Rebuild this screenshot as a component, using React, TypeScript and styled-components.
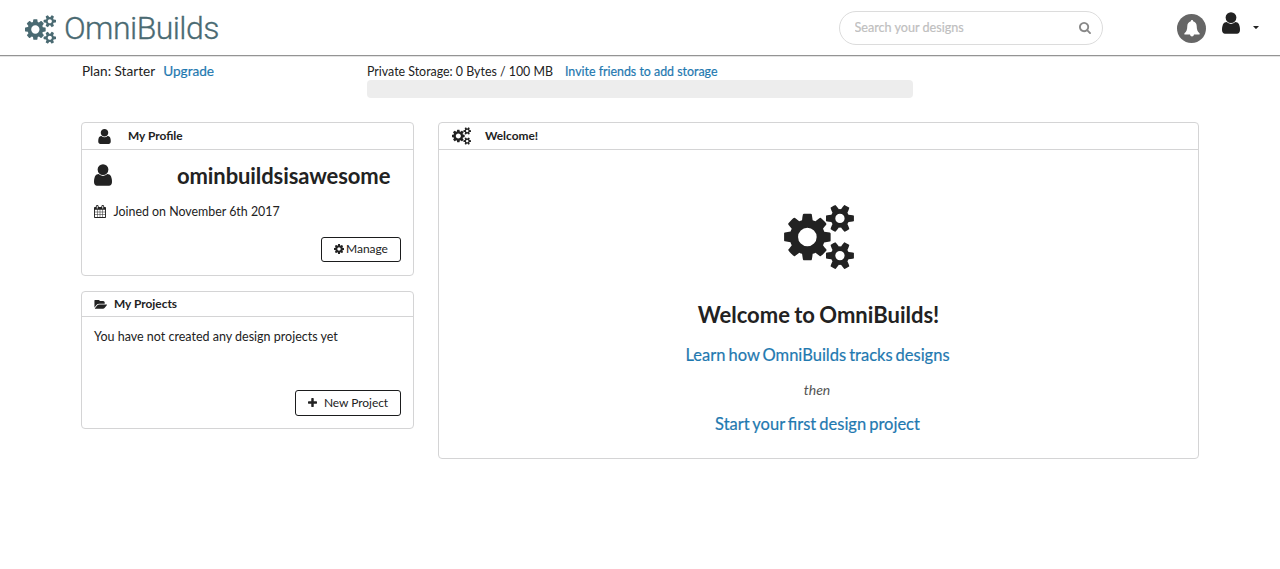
import React from "react";
import styled, { createGlobalStyle } from "styled-components";

const GlobalStyle = createGlobalStyle`
  *, *::before, *::after { box-sizing: border-box; }
  body {
    margin: 0;
    background: #fff;
    color: #222;
    font-family: Lato, "Liberation Sans", sans-serif;
    font-size: 13px;
    line-height: 18px;
  }
  h1, h2, h3, p { margin: 0; }
`;

const GEAR_SMALL =
  "v140q0 16-149 31-12 27-30 52 51 113 51 138 0 4-4 7-122 71-124 71-8 0-46-47t-52-68q-20 2-30 2t-30-2q-14 21-52 68t-46 47q-2 0-124-71-4-3-4-7 0-25 51-138-18-25-30-52-149-15-149-31v-140q0-16 149-31 13-29 30-52-51-113-51-138 0-4 4-7 4-2 35-20t59-34 30-16q8 0 46 46.5t52 67.5q20-2 30-2t30 2q51-71 92-112l6-2q4 0 124 70 4 3 4 7 0 25-51 138 17 23 30 52 149 15 149 31z";

const ICONS = {
  user: {
    box: "256 128 1280 1536",
    d: "M1536 1399q0 109-62.5 187t-150.5 78h-854q-88 0-150.5-78t-62.5-187q0-85 8.5-160.5t31.5-152 58.5-131 94-89 134.5-34.5q131 128 313 128t313-128q76 0 134.5 34.5t94 89 58.5 131 31.5 152 8.5 160.5zm-256-887q0 159-112.5 271.5t-271.5 112.5-271.5-112.5-112.5-271.5 112.5-271.5 271.5-112.5 271.5 112.5 112.5 271.5z",
  },
  cogs: {
    box: "-64 16 1920 1760",
    d:
      "M832 896q0-106-75-181t-181-75-181 75-75 181 75 181 181 75 181-75 75-181zm768 512q0-52-38-90t-90-38-90 38-38 90q0 53 37.5 90.5t90.5 37.5 90.5-37.5 37.5-90.5zm0-1024q0-52-38-90t-90-38-90 38-38 90q0 53 37.5 90.5t90.5 37.5 90.5-37.5 37.5-90.5zm-384 421v185q0 10-7 19.5t-16 10.5l-155 24q-11 35-32 76 34 48 90 115 7 11 7 20 0 12-7 19-23 30-82.5 89.5t-78.5 59.5q-11 0-21-7l-115-90q-37 19-77 31-11 108-23 155-7 24-30 24h-186q-11 0-20-7.5t-10-17.5l-23-153q-34-10-75-31l-118 89q-7 7-20 7-11 0-21-8-144-133-144-160 0-9 7-19 10-14 41-53t47-61q-23-44-35-82l-152-24q-10-1-17-9.5t-7-19.5v-185q0-10 7-19.5t16-10.5l155-24q11-35 32-76-34-48-90-115-7-11-7-20 0-12 7-20 22-30 82-89t79-59q11 0 21 7l115 90q34-18 77-32 11-108 23-154 7-24 30-24h186q11 0 20 7.5t10 17.5l23 153q34 10 75 31l118-89q8-7 20-7 11 0 21 8 144 133 144 160 0 8-7 19-12 16-42 54t-45 60q23 48 34 82l152 23q10 2 17 10.5t7 19.5z" +
      "M1856 1338" + GEAR_SMALL + "M1856 314" + GEAR_SMALL,
  },
  folder: {
    box: "0 256 1943 1280",
    d: "M1943 952q0 31-31 66l-336 396q-43 51-120.5 86.5t-143.5 35.5h-1088q-34 0-60.5-13t-26.5-43q0-31 31-66l336-396q43-51 120.5-86.5t143.5-35.5h1088q34 0 60.5 13t26.5 43zm-343-344v160h-832q-94 0-197 47.5t-164 119.5l-337 396-5 6q0-4-.5-12.5t-.5-12.5v-960q0-92 66-158t158-66h320q92 0 158 66t66 158v32h544q92 0 158 66t66 158z",
  },
  plus: {
    box: "192 128 1408 1408",
    d: "M1600 736v192q0 40-28 68t-68 28h-416v416q0 40-28 68t-68 28h-192q-40 0-68-28t-28-68v-416h-416q-40 0-68-28t-28-68v-192q0-40 28-68t68-28h416v-416q0-40 28-68t68-28h192q40 0 68 28t28 68v416h416q40 0 68 28t28 68z",
  },
  search: {
    box: "64 128 1664 1664",
    d: "M1216 832q0-185-131.5-316.5t-316.5-131.5-316.5 131.5-131.5 316.5 131.5 316.5 316.5 131.5 316.5-131.5 131.5-316.5zm512 832q0 52-38 90t-90 38q-54 0-90-38l-343-342q-179 124-399 124-143 0-273.5-55.5t-225-150-150-225-55.5-273.5 55.5-273.5 150-225 225-150 273.5-55.5 273.5 55.5 225 150 150 225 55.5 273.5q0 220-124 399l343 343q37 37 37 90z",
  },
  cog: {
    box: "128 128 1536 1536",
    d: "M1152 896q0-106-75-181t-181-75-181 75-75 181 75 181 181 75 181-75 75-181zm512-109v222q0 12-8 23t-20 13l-185 28q-19 54-39 91 35 50 107 138 10 12 10 25t-9 23q-27 37-99 108t-94 71q-12 0-26-9l-138-108q-44 23-91 38-16 136-29 186-7 28-36 28h-222q-14 0-24.5-8.5t-11.5-21.5l-28-184q-49-16-90-37l-141 107q-10 9-25 9-14 0-25-11-126-114-165-168-7-10-7-23 0-12 8-23 15-21 51-66.5t54-70.5q-27-50-41-99l-183-27q-13-2-21-12.5t-8-23.5v-222q0-12 8-23t19-13l186-28q14-46 39-92-40-57-107-138-10-12-10-24 0-10 9-23 26-36 98.5-107.5t94.5-71.5q13 0 26 10l138 107q44-23 91-38 16-136 29-186 7-28 36-28h222q14 0 24.5 8.5t11.5 21.5l28 184q49 16 90 37l142-107q9-9 24-9 13 0 25 10 129 119 165 170 7 8 7 22 0 12-8 23-15 21-51 66.5t-54 70.5q26 50 41 98l183 28q13 2 21 12.5t8 23.5z",
  },
  calendar: {
    box: "64 0 1664 1792",
    d: "M192 1664h288v-288h-288v288zm352 0h320v-288h-320v288zm-352-352h288v-320h-288v320zm352 0h320v-320h-320v320zm-352-384h288v-288h-288v288zm736 736h320v-288h-320v288zm-384-736h320v-288h-320v288zm768 736h288v-288h-288v288zm-384-352h320v-320h-320v320zm-352-864v-288q0-13-9.5-22.5t-22.5-9.5h-64q-13 0-22.5 9.5t-9.5 22.5v288q0 13 9.5 22.5t22.5 9.5h64q13 0 22.5-9.5t9.5-22.5zm736 864h288v-320h-288v320zm-384-384h320v-288h-320v288zm384 0h288v-288h-288v288zm32-480v-288q0-13-9.5-22.5t-22.5-9.5h-64q-13 0-22.5 9.5t-9.5 22.5v288q0 13 9.5 22.5t22.5 9.5h64q13 0 22.5-9.5t9.5-22.5zm384-64v1280q0 52-38 90t-90 38h-1408q-52 0-90-38t-38-90v-1280q0-52 38-90t90-38h128v-96q0-66 47-113t113-47h64q66 0 113 47t47 113v96h384v-96q0-66 47-113t113-47h64q66 0 113 47t47 113v96h128q52 0 90 38t38 90z",
  },
  bell: {
    box: "0 0 16 17",
    d: "M8 0C8.7 0 9.1.5 9.1 1.3C11.4 1.9 12.6 3.7 12.7 6C12.8 9.5 13.5 11.8 15.6 13.2V14.6H10C9.8 15.8 9 16.5 8 16.5S6.2 15.8 6 14.6H.4V13.2C2.5 11.8 3.2 9.5 3.3 6C3.4 3.7 4.6 1.9 6.9 1.3C6.9.5 7.3 0 8 0Z",
  },
  caret: { box: "0 0 6 3", d: "M0 0H6L3.4 2.8Q3 3.1 2.6 2.8Z" },
};

const Glyph = styled.svg<{ $w: number; $h: number }>`
  display: block;
  flex: none;
  width: ${(p) => p.$w}px;
  height: ${(p) => p.$h}px;
  fill: currentColor;
`;

const Icon = ({ name, w, h }: { name: keyof typeof ICONS; w: number; h: number }) => (
  <Glyph $w={w} $h={h} viewBox={ICONS[name].box} aria-hidden="true">
    <path d={ICONS[name].d} />
  </Glyph>
);

const Header = styled.header`
  display: flex;
  align-items: flex-start;
  height: 57px;
  padding: 11px 21px 0 25px;
  border-bottom: 1px solid #e4e4e4;
  box-shadow: inset 0 -1px 0 #949494;
`;

const Brand = styled.div`
  display: flex;
  align-items: flex-start;
  gap: 8px;
  padding-top: 4px;
  color: #4a6a72;
`;

const BrandName = styled.span`
  margin-top: -7px;
  font: 300 32px/40px Roboto, "Open Sans", sans-serif;
  letter-spacing: -0.55px;
  white-space: nowrap;
  -webkit-text-stroke: 0.3px currentColor;
`;

const SearchBox = styled.label`
  display: flex;
  align-items: center;
  width: 264px;
  height: 34px;
  margin-left: auto;
  padding: 0 11px 1px 14.5px;
  border: 1px solid #dcdcdc;
  border-radius: 17px;
  color: #888;
`;

const SearchInput = styled.input`
  flex: 1;
  min-width: 0;
  padding: 0;
  border: 0;
  outline: 0;
  background: transparent;
  font: 12.6px Lato, sans-serif;
  &::placeholder {
    color: #c0c0c0;
    opacity: 1;
    -webkit-text-stroke: 0.2px currentColor;
  }
`;

const Bell = styled.button`
  display: flex;
  justify-content: center;
  width: 29px;
  height: 29px;
  margin: 3px 0 0 74px;
  padding: 6px 0 0;
  border: 0;
  border-radius: 50%;
  background: #666;
  color: #fff;
`;

const Account = styled.div`
  display: flex;
  align-items: center;
  gap: 13px;
  margin: 1px 0 0 16px;
`;

const CaretSlot = styled.span`
  margin-top: 9px;
`;

const Content = styled.main`
  width: 1118px;
  margin: 0 0 0 81px;
`;

const Summary = styled.section`
  display: flex;
  height: 65px;
  padding-top: 5px;
`;

const Plan = styled.div`
  width: 286px;
  padding-left: 1px;
  font-size: 13.6px;
`;

const Link = styled.a<{ $gap?: number }>`
  margin-left: ${(p) => p.$gap ?? 0}px;
  color: #1f79b0;
  text-decoration: none;
  -webkit-text-stroke: 0.2px currentColor;
`;

const Storage = styled.div`
  width: 546px;
  font-size: 12.4px;
`;

const StorageText = styled.p`
  height: 18px;
  line-height: 20px;
`;

const Meter = styled.div`
  height: 18px;
  border-radius: 4px;
  background: #ededed;
`;

const Columns = styled.div`
  display: flex;
  align-items: flex-start;
  gap: 24px;
`;

const Side = styled.div`
  display: flex;
  flex-direction: column;
  gap: 15px;
  width: 333px;
`;

const Panel = styled.section<{ $h: number }>`
  display: flex;
  flex: 1 0 auto;
  flex-direction: column;
  height: ${(p) => p.$h}px;
  border: 1px solid #d4d4d5;
  border-radius: 4px;
`;

const PanelHead = styled.h3<{ $h: number; $left: number; $gap: number }>`
  display: flex;
  flex: none;
  align-items: center;
  gap: ${(p) => p.$gap}px;
  height: ${(p) => p.$h}px;
  padding-left: ${(p) => p.$left}px;
  border-bottom: 1px solid #d4d4d5;
  font-size: 11.9px;
  font-weight: 700;
`;

const PanelBody = styled.div`
  display: flex;
  flex: 1;
  flex-direction: column;
  padding: 11px 12px 12px;
`;

const ProfileRow = styled.div`
  display: flex;
  align-items: center;
  gap: 65px;
  height: 28px;
`;

const UserName = styled.h2`
  margin-top: 1px;
  font-size: 22px;
  letter-spacing: -0.1px;
  font-weight: 700;
  line-height: 28px;
`;

const Joined = styled.p`
  display: flex;
  align-items: center;
  gap: 7.5px;
  margin-top: 14px;
  font-size: 12.4px;
`;

const CalendarSlot = styled.span`
  margin-top: -1px;
`;

const Note = styled.p`
  font-size: 12.5px;
`;

const Button = styled.button<{ $w: number; $h: number; $gap: number }>`
  display: flex;
  align-items: center;
  justify-content: center;
  gap: ${(p) => p.$gap}px;
  align-self: flex-end;
  width: ${(p) => p.$w}px;
  height: ${(p) => p.$h}px;
  margin-top: auto;
  padding: 0 0 1px;
  border: 1px solid #1b1c1d;
  border-radius: 3px;
  background: #fff;
  color: #222;
  font: 12px Lato, sans-serif;
  letter-spacing: -0.05px;
`;

const ManageButton = styled(Button)`
  margin-bottom: 1px;
  padding-bottom: 2px;
`;

const Welcome = styled.div`
  display: flex;
  flex: 1;
  flex-direction: column;
  align-items: center;
  padding: 55px 0 0;
`;

const WelcomeTitle = styled.h1`
  margin-top: 31px;
  font-size: 22px;
  word-spacing: -1px;
  font-weight: 700;
  line-height: 30px;
`;

const Step = styled.p`
  margin-top: 14px;
  padding-right: 2px;
  font-size: 16.5px;
  word-spacing: -1.2px;
  line-height: 22px;
`;

const Then = styled.p`
  margin-top: 14px;
  margin-bottom: -1px;
  padding-right: 3px;
  color: #555;
  font-size: 14px;
  font-style: italic;
  line-height: 20px;
`;

export default function App() {
  return (
    <>
      <GlobalStyle />
      <Header>
        <Brand>
          <Icon name="cogs" w={31} h={29} />
          <BrandName>OmniBuilds</BrandName>
        </Brand>
        <SearchBox>
          <SearchInput placeholder="Search your designs" />
          <Icon name="search" w={12} h={12} />
        </SearchBox>
        <Bell aria-label="Notifications">
          <Icon name="bell" w={16} h={17} />
        </Bell>
        <Account>
          <Icon name="user" w={18} h={22} />
          <CaretSlot>
            <Icon name="caret" w={6} h={3} />
          </CaretSlot>
        </Account>
      </Header>
      <Content>
        <Summary>
          <Plan>
            Plan: Starter<Link $gap={8}>Upgrade</Link>
          </Plan>
          <Storage>
            <StorageText>
              Private Storage: 0 Bytes / 100 MB<Link $gap={12}>Invite friends to add storage</Link>
            </StorageText>
            <Meter />
          </Storage>
        </Summary>
        <Columns>
          <Side>
            <Panel $h={154}>
              <PanelHead $h={27} $left={16} $gap={17}>
                <Icon name="user" w={13} h={15} />
                My Profile
              </PanelHead>
              <PanelBody>
                <ProfileRow>
                  <Icon name="user" w={18} h={22} />
                  <UserName>ominbuildsisawesome</UserName>
                </ProfileRow>
                <Joined>
                  <CalendarSlot>
                    <Icon name="calendar" w={12} h={13} />
                  </CalendarSlot>
                  Joined on November 6th 2017
                </Joined>
                <ManageButton $w={80} $h={25} $gap={2}>
                  <Icon name="cog" w={10} h={10} />
                  Manage
                </ManageButton>
              </PanelBody>
            </Panel>
            <Panel $h={138}>
              <PanelHead $h={25} $left={12} $gap={7}>
                <Icon name="folder" w={13} h={9} />
                My Projects
              </PanelHead>
              <PanelBody>
                <Note>You have not created any design projects yet</Note>
                <Button $w={106} $h={26} $gap={7}>
                  <Icon name="plus" w={9} h={9} />
                  New Project
                </Button>
              </PanelBody>
            </Panel>
          </Side>
          <Panel $h={337}>
            <PanelHead $h={27} $left={13} $gap={14}>
              <Icon name="cogs" w={19} h={18} />
              Welcome!
            </PanelHead>
            <Welcome>
              <Icon name="cogs" w={70} h={64} />
              <WelcomeTitle>Welcome to OmniBuilds!</WelcomeTitle>
              <Step>
                <Link>Learn how OmniBuilds tracks designs</Link>
              </Step>
              <Then>then</Then>
              <Step>
                <Link>Start your first design project</Link>
              </Step>
            </Welcome>
          </Panel>
        </Columns>
      </Content>
    </>
  );
}
